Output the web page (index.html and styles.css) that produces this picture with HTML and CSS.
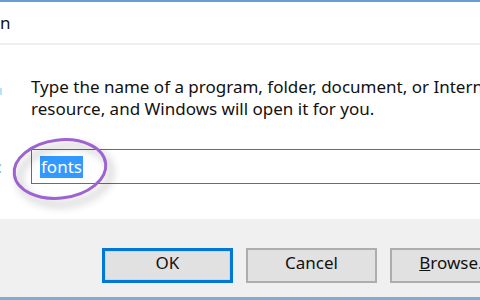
FILE: index.html
```html
<!DOCTYPE html>
<html lang="en">
<head>
    <meta charset="UTF-8">
    <meta name="viewport" content="width=device-width, initial-scale=1.0">
    <title>Run</title>
    <link rel="stylesheet" href="styles.css">
</head>
<body>

    <div class="dialog">
        <div class="titlebar"><span class="title">Run</span></div>

        <div class="dialog-body">
            <div class="icon-cell">
                <svg class="run-icon" width="32" height="32" viewBox="0 0 32 32">
                    <rect x="1" y="4" width="26" height="22" fill="#f4f4f4" stroke="#8a8a8a"/>
                    <rect x="1" y="4" width="26" height="5" fill="#4a8fd6"/>
                    <rect x="29" y="12" width="3" height="7" fill="#b8e2f8"/>
                </svg>
            </div>
            <p class="prompt">Type the name of a program, folder, document, or Internet<br>resource, and Windows will open it for you.</p>

            <label class="open-label" for="command">Open:</label>
            <div class="input-box" id="command">
                <span class="selected">fonts</span>
            </div>
        </div>

        <div class="dialog-footer">
            <button class="btn default">OK</button>
            <button class="btn">Cancel</button>
            <button class="btn"><u>B</u>rowse...</button>
        </div>
    </div>

    <svg class="annotation" width="124" height="90" viewBox="0 0 124 90">
        <ellipse cx="52" cy="36" rx="46" ry="29" transform="rotate(-7 52 36)" fill="none" stroke="#9d63d3" stroke-width="3"/>
    </svg>

</body>
</html>
```

FILE: styles.css
```css
body { margin: 0; background: #fff; position: relative; overflow: hidden; width: 480px; height: 300px; font-family: 'Noto Sans', sans-serif; color: #111; }
.dialog { margin-left: -60px; width: 620px; height: 300px; display: flex; flex-direction: column; border-top: 2px solid #6b9bd1; box-sizing: border-box; }
.titlebar { height: 41px; border-bottom: 2px solid #efefef; display: flex; align-items: center; padding-left: 39px; font-size: 17px; }
.dialog-body { flex: 1; display: grid; grid-template-columns: 91px 1fr; grid-template-rows: auto auto; align-content: start; padding-top: 31px; }
.icon-cell { padding-left: 30px; }
.run-icon { display: block; }
.prompt { margin: 0; font-size: 17px; line-height: 22px; white-space: nowrap; }
.open-label { font-size: 17px; color: #7fb8d8; text-align: right; align-self: center; padding-right: 29px; margin-top: 29px; }
.input-box { margin-top: 29px; height: 35px; border: 1px solid #1a80d8; border-right: none; box-sizing: border-box; display: flex; align-items: center; padding-left: 8px; font-size: 17px; }
.selected { background: #3399ff; color: #fff; line-height: 22px; padding: 0 1px; }
.dialog-footer { height: 81px; background: #f0f0f0; border-bottom: 3px solid #86a9d1; box-sizing: border-box; display: flex; gap: 13px; padding: 29px 0 0 162px; align-items: flex-start; }
.btn { width: 131px; height: 35px; background: #e1e1e1; border: 2px solid #adadad; font-family: 'Noto Sans', sans-serif; font-size: 17px; color: #111; padding: 0 0 6px; flex: none; }
.btn.default { border: 3px solid #0078d7; box-shadow: inset 0 0 0 1px #c8d8e8; }
.annotation { position: absolute; left: 8px; top: 133px; filter: drop-shadow(5px 6px 4px rgba(0,0,0,0.33)); }
```
